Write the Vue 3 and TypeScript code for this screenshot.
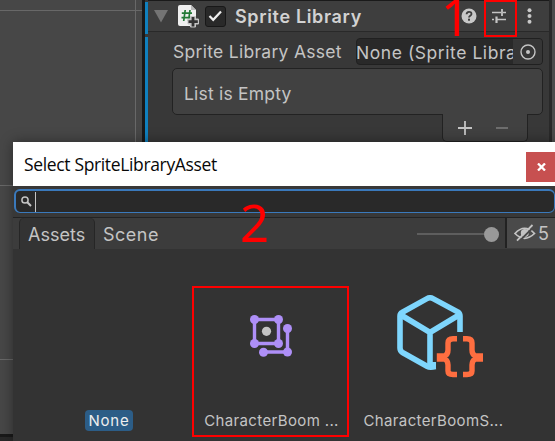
<script setup lang="ts">
interface AssetItem {
  id: number
  label: string
  icon: 'none' | 'sprite' | 'library'
  selected?: boolean
}

const assets: AssetItem[] = [
  { id: 1, label: 'None', icon: 'none', selected: true },
  { id: 2, label: 'CharacterBoom ...', icon: 'sprite' },
  { id: 3, label: 'CharacterBoomS...', icon: 'library' },
]
</script>

<template>
  <main class="editor">
    <div class="workspace">
      <section class="scene">
        <i class="grid-v"></i>
        <i class="grid-h top"></i>
        <i class="grid-h middle"></i>
        <i class="grid-h bottom"></i>
        <i class="scene-end"></i>
      </section>
      <section class="inspector">
        <div class="override"><i></i><i></i></div>
        <div class="component">
          <header class="component-head">
            <svg class="fold" width="14" height="13" viewBox="0 0 14 13"><path d="M0 0H14L7 12.5Z" fill="#747474" /></svg>
            <svg class="script" width="22" height="24" viewBox="0 0 22 24">
              <path d="M2 0H13L18 5V21H2Q0 21 0 19V2Q0 0 2 0Z" fill="#efefef" />
              <path d="M13 0V5H18Z" fill="#b9b9b9" />
              <path d="M7.2 5L5.7 16M12 5L10.5 16M3.8 8.2H14M3.5 12.7H13.5" stroke="#237a36" stroke-width="1.7" fill="none" />
              <path d="M12.5 11.5H17.5V14H20.5V19H17.5V22H12.5V19H10V14H12.5Z" fill="#c4c4c4" stroke="#c4c4c4" stroke-width="1" stroke-linejoin="round" />
              <path d="M15 12V21.5M10.5 16.7H19.8" stroke="#333" stroke-width="2.8" />
            </svg>
            <span class="check"><svg width="15" height="12" viewBox="0 0 15 12"><path d="M1.5 6L5.2 9.8L13 1.5" fill="none" stroke="#eee" stroke-width="2.2" /></svg></span>
            <h1>Sprite Library</h1>
            <svg class="help" width="16" height="16" viewBox="0 0 16 16">
              <circle cx="8" cy="8" r="7.5" fill="#c8c8c8" />
              <path d="M5.6 6.3C5.6 3 10.5 3.1 10.5 5.9C10.5 7.7 8 7.8 8 9.5" fill="none" stroke="#3e3e3e" stroke-width="1.8" />
              <rect x="7" y="10.7" width="2" height="2" fill="#3e3e3e" />
            </svg>
            <svg class="preset" width="16" height="16" viewBox="0 0 16 16">
              <path d="M1 4.5H10M12 4.5H15M1 11.5H3M6 11.5H15" stroke="#c4c4c4" stroke-width="1.7" />
              <path d="M11 1V8" stroke="#c4c4c4" stroke-width="1.8" /><path d="M5.5 8.5V15" stroke="#c4c4c4" stroke-width="2.2" />
            </svg>
            <svg class="more" width="5" height="16" viewBox="0 0 5 16"><g fill="#c8c8c8"><circle cx="2.5" cy="2.2" r="2" /><circle cx="2.5" cy="8" r="2" /><circle cx="2.5" cy="13.8" r="2" /></g></svg>
          </header>
          <div class="property">
            <label>Sprite Library Asset</label>
            <div class="object-field">
              <span>None (Sprite Library Asset)</span>
              <b><svg width="16" height="16" viewBox="0 0 16 16"><circle cx="8" cy="8" r="7" fill="none" stroke="#c4c4c4" stroke-width="1.4" /><circle cx="8" cy="8" r="2" fill="#c4c4c4" /></svg></b>
            </div>
          </div>
          <div class="list">List is Empty</div>
          <div class="list-foot">
            <svg width="14" height="14" viewBox="0 0 14 14"><path d="M0 7H14M7 0V14" stroke="#c4c4c4" stroke-width="1.8" /></svg>
            <svg width="12" height="14" viewBox="0 0 12 14"><path d="M0 7H12" stroke="#747474" stroke-width="1.8" /></svg>
          </div>
        </div>
        <i class="inspector-end"></i>
        <i class="neighbor"></i>
      </section>
    </div>

    <section class="dialog">
      <header class="title">
        <span>Select SpriteLibraryAsset</span>
        <button><svg width="9" height="8" viewBox="0 0 9 8"><path d="M1 .5L8 7.5M8 .5L1 7.5" stroke="#fff" stroke-width="2.3" /></svg></button>
      </header>
      <div class="search">
        <svg width="11" height="11" viewBox="0 0 11 11"><circle cx="4" cy="4" r="3.1" fill="none" stroke="#c4c4c4" stroke-width="1.5" /><path d="M6.3 6.3L10 10" stroke="#c4c4c4" stroke-width="2" /></svg>
        <i></i>
      </div>
      <nav class="tabs">
        <span class="tab active">Assets</span>
        <span class="tab">Scene</span>
        <div class="slider"><i></i><b></b></div>
        <div class="hidden-count">
          <svg width="22" height="18" viewBox="0 0 22 18">
            <path d="M1 9.5Q10.5-1 20.5 9.5Q10.5 19 1 9.5Z" fill="none" stroke="#c4c4c4" stroke-width="1.7" />
            <circle cx="10.8" cy="9" r="4" fill="#c4c4c4" />
            <path d="M4.5 18L20.5 2" stroke="#4a4a4a" stroke-width="2" /><path d="M3 16.7L18.5 1" stroke="#c4c4c4" stroke-width="1.8" />
          </svg>
          <span>5</span>
        </div>
      </nav>
      <div class="assets">
        <article v-for="item in assets" :key="item.id" class="asset">
          <div class="preview">
            <svg v-if="item.icon === 'sprite'" width="44" height="44" viewBox="0 0 44 44">
              <g stroke="#ae8ff7" stroke-width="3.4" fill="none"><path d="M5.5 5.5H29.5V29.5H5.5ZM38.5 14.5V38H14.5" /></g>
              <g fill="#ae8ff7"><circle cx="5.5" cy="5.5" r="4.5" /><circle cx="29.5" cy="5.5" r="4.5" /><circle cx="5.5" cy="29.5" r="4.5" /><circle cx="29.5" cy="29.5" r="4.5" /><circle cx="38.5" cy="14.5" r="4.5" /><circle cx="38.5" cy="38" r="4.5" /><circle cx="14.5" cy="38.3" r="4.5" /></g>
              <circle cx="17.5" cy="17.3" r="4.6" fill="#c4c4c4" />
            </svg>
            <svg v-else-if="item.icon === 'library'" width="86" height="84" viewBox="0 0 86 84">
              <g fill="none" stroke="#7ed6fd" stroke-width="5.6">
                <path d="M63 37V21Q63 18.5 61 17L36 3.6Q33 2 30 3.6L5 17.5Q3 18.5 3 21V53Q3 56 5.5 57.5L30 71.3Q33 73 38.5 71.5" />
                <path d="M4 20L33 37.5L62 20M33 37V71" />
              </g>
              <path d="M33 67H39V73H33Z" fill="#7ed6fd" />
              <path d="M60 43.7H56Q51 43.7 51 48V55Q51 59 48 61H42.5V64H48Q51 66 51 70V76Q51 79.5 56 79.5H60M66 43.7H70Q75 43.7 75 48V55Q75 59 78 61H84V64H78Q75 66 75 70V76Q75 79.5 70 79.5H66" fill="none" stroke="#ff6e40" stroke-width="5.4" />
            </svg>
          </div>
          <span class="caption" :class="{ selected: item.selected }">{{ item.label }}</span>
        </article>
      </div>
    </section>

    <div class="mark mark-one"></div>
    <div class="mark mark-two"></div>
    <span class="number one">1</span>
    <span class="number two">2</span>
  </main>
</template>

<style>
body { margin: 0; overflow: hidden; }
</style>
<style scoped>
* { box-sizing: border-box; }
svg { display: block; flex: none; }
.editor { position: relative; width: 555px; height: 441px; overflow: hidden; background: #474747; font-family: Inter, "Liberation Sans", sans-serif; color: #c4c4c4; white-space: nowrap; }
.workspace { display: flex; height: 441px; }
.scene { position: relative; width: 142px; background: #474747; }
.grid-v { position: absolute; left: 135px; top: 0; width: 1px; height: 441px; background: #686868; }
.grid-h { position: absolute; left: 0; width: 142px; height: 1px; background: #686868; }
.top { top: 10px; }
.middle { top: 185px; }
.bottom { top: 359px; }
.scene-end { position: absolute; left: 0; top: 434px; width: 142px; height: 7px; background: #282828; border-top: 3px solid #191919; }
.inspector { display: flex; width: 413px; border-left: 3px solid #191919; background: #383838; }
.override { width: 3px; padding-top: 2px; display: flex; flex-direction: column; gap: 3px; }
.override i { height: 32px; background: #1080be; }
.override i + i { height: 110px; }
.component { width: 401px; }
.component-head { display: flex; align-items: center; height: 32px; border-top: 1px solid #1a1a1a; border-bottom: 1px solid #292929; background: #3e3e3e; padding-left: 6px; }
.script { margin: 2px 0 0 10px; }
.check { display: flex; align-items: center; justify-content: center; width: 21px; height: 21px; margin-left: 5px; background: #292929; border: 1px solid #181818; border-radius: 3px; }
h1 { margin: 1px 0 0 9px; width: 226px; font-size: 18px; line-height: 24px; letter-spacing: .65px; font-weight: 600; color: #d2d2d2; }
.preset { margin-left: 14px; }
.more { margin-left: 20px; }
.property { display: flex; height: 36px; padding: 6px 0 0 25px; }
label { width: 183px; font-size: 17.5px; line-height: 27px; letter-spacing: .29px; }
.object-field { display: flex; width: 187px; height: 27px; overflow: hidden; border: 1px solid #202020; border-radius: 4px; background: #292929; }
.object-field span { width: 157px; overflow: hidden; padding-left: 0; font-size: 17.5px; line-height: 27px; letter-spacing: .55px; margin-left: -1px; }
.object-field b { flex: 1; display: flex; align-items: center; justify-content: center; background: #363636; }
.list { width: 371px; height: 47px; margin-left: 24px; border: 1px solid #222; border-radius: 5px; background: #414141; font-size: 17.5px; line-height: 49px; letter-spacing: .2px; padding-left: 11px; }
.list-foot { display: flex; align-items: center; width: 86px; height: 28px; margin: -1px 0 0 294px; padding-left: 15px; gap: 24px; border: 1px solid #222; border-top: 0; border-radius: 0 0 5px 5px; background: #414141; }
.inspector-end { width: 3px; background: #292929; }
.neighbor { width: 3px; background: #4b4b4b; }
.dialog { position: absolute; left: 13px; top: 142px; width: 542px; height: 299px; background: #383838; box-shadow: 0 0 12px rgba(0, 0, 0, .4); }
.title { display: flex; justify-content: space-between; align-items: center; height: 44px; padding-left: 11px; background: #fff; color: #080808; font: 17.5px/44px "Open Sans", sans-serif; letter-spacing: -.35px; }
button { display: flex; align-items: center; justify-content: center; width: 29px; height: 30px; padding: 0 0 0 2px; border: 0; background: #c75050; margin-top: 6px; }
.search { display: flex; align-items: center; gap: 3px; height: 24px; margin: 3px 0 4px 1px; padding-left: 5px; border: 2px solid #3a79bb; border-bottom-width: 1px; border-right-width: 1px; border-radius: 6px; background: #292929; }
.search i { width: 1px; height: 20px; background: #c4c4c4; }
.tabs { display: flex; height: 32px; border-top: 1px solid #222; padding-left: 6px; background: #3c3c3c; }
.tab { width: 76px; padding-left: 9px; font-size: 18px; line-height: 33px; letter-spacing: 0; }
.tab.active { background: #333; border-left: 1px solid #262626; border-right: 1px solid #262626; border-radius: 5px 5px 0 0; padding-left: 8px; }
.tab:not(.active) { padding-left: 8px; letter-spacing: .5px; }
.slider { display: flex; align-items: center; width: 82px; margin-left: 246px; height: 32px; }
.slider i { width: 67px; height: 2px; background: #5e5e5e; }
.slider b { width: 15px; height: 15px; border-radius: 50%; background: #999; }
.hidden-count { display: flex; align-items: center; margin-left: 6px; width: 50px; height: 30px; padding: 0 0 0 7px; gap: 2px; border-left: 2px solid #222; background: #4a4a4a; font-size: 18px; }
.assets { display: grid; grid-template-columns: 160px 160px 160px; padding: 36px 0 0 16px; height: 192px; background: #333; }
.asset { display: flex; flex-direction: column; align-items: center; }
.preview { display: flex; align-items: center; justify-content: center; width: 160px; height: 125px; }
.asset:nth-child(2) .preview { align-items: flex-start; padding: 29px 0 0 4px; }
.asset:nth-child(3) .preview { align-items: flex-start; padding: 10px 0 0 22px; }
.caption { height: 21px; padding: 0 4px; font-size: 15px; line-height: 22px; letter-spacing: .36px; }
.asset:nth-child(1) .caption { letter-spacing: .75px; }
.asset:nth-child(2) .caption { margin-left: 5px; }
.asset:nth-child(3) .caption { margin-left: 9px; }
.selected { background: #2c5d87; color: #eee; border-radius: 4px; }
.mark { position: absolute; border: 2px solid #f00; }
.mark-one { left: 484px; top: 0; width: 33px; height: 37px; }
.mark-two { left: 192px; top: 286px; width: 157px; height: 151px; }
.number { position: absolute; color: #f00; font: 51px/60px "Noto Sans", sans-serif; }
.one { left: 441px; top: -14px; }
.two { left: 240px; top: 192px; }
</style>
